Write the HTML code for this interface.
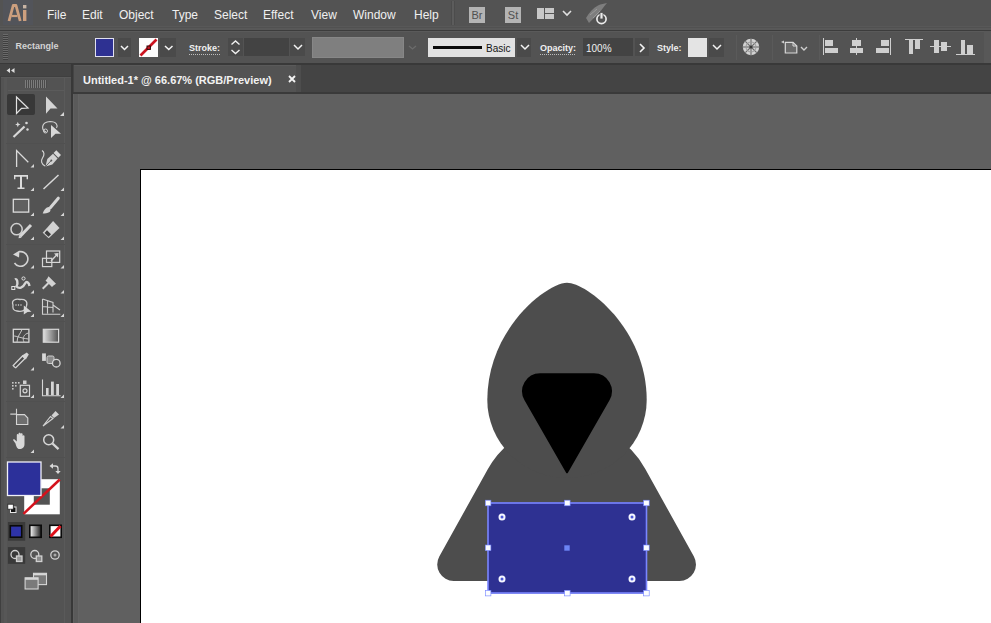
<!DOCTYPE html>
<html><head><meta charset="utf-8">
<style>
*{box-sizing:border-box;margin:0;padding:0}
html,body{width:991px;height:623px;overflow:hidden;background:#535353;font-family:"Liberation Sans",sans-serif}
.a{position:absolute}
.t{position:absolute;white-space:nowrap;line-height:11px}
</style></head>
<body>
<div class="a" style="left:0px;top:0px;width:991px;height:26px;background:#535353;"></div>
<div class="a" style="left:0px;top:26px;width:991px;height:4px;background:#585858;"></div>
<div class="a" style="left:0px;top:30px;width:991px;height:1px;background:#3c3c3c;"></div>
<svg class="a" style="left:0;top:0" width="34" height="26">
<rect x="3" y="0" width="30" height="25" fill="#52545a"/>
<path d="M9,21 L13.2,5.5 L16,5.5 L20.2,21" fill="none" stroke="#cc9f7e" stroke-width="2.8" stroke-linejoin="round"/>
<line x1="11.5" y1="16" x2="17.5" y2="16" stroke="#cc9f7e" stroke-width="2.2"/>
<rect x="23" y="5" width="3.4" height="3.4" fill="#c8b4a4"/>
<rect x="23" y="10" width="3.4" height="11" fill="#cc9f7e"/>
</svg>
<div class="t" style="left:47px;top:8px;font-size:12px;color:#f0f0f0;font-weight:400;line-height:14px;">File</div>
<div class="t" style="left:82px;top:8px;font-size:12px;color:#f0f0f0;font-weight:400;line-height:14px;">Edit</div>
<div class="t" style="left:119px;top:8px;font-size:12px;color:#f0f0f0;font-weight:400;line-height:14px;">Object</div>
<div class="t" style="left:172px;top:8px;font-size:12px;color:#f0f0f0;font-weight:400;line-height:14px;">Type</div>
<div class="t" style="left:214px;top:8px;font-size:12px;color:#f0f0f0;font-weight:400;line-height:14px;">Select</div>
<div class="t" style="left:263px;top:8px;font-size:12px;color:#f0f0f0;font-weight:400;line-height:14px;">Effect</div>
<div class="t" style="left:311px;top:8px;font-size:12px;color:#f0f0f0;font-weight:400;line-height:14px;">View</div>
<div class="t" style="left:353px;top:8px;font-size:12px;color:#f0f0f0;font-weight:400;line-height:14px;">Window</div>
<div class="t" style="left:414px;top:8px;font-size:12px;color:#f0f0f0;font-weight:400;line-height:14px;">Help</div>
<div class="a" style="left:451px;top:1px;width:1px;height:24px;background:#4c4c4c;"></div>
<div class="a" style="left:452px;top:1px;width:2px;height:24px;background:#5c5c5c;"></div>
<div class="a" style="left:454px;top:1px;width:1px;height:24px;background:#4c4c4c;"></div>
<div class="a" style="left:469px;top:7px;width:16px;height:16px;background:#b4b4b4;"></div>
<div class="t" style="left:469px;top:7px;font-size:11px;color:#505050;font-weight:400;width:16px;text-align:center;line-height:16px;">Br</div>
<div class="a" style="left:505px;top:7px;width:16px;height:16px;background:#b4b4b4;"></div>
<div class="t" style="left:505px;top:7px;font-size:11px;color:#505050;font-weight:400;width:16px;text-align:center;line-height:16px;">St</div>
<div class="a" style="left:537px;top:8px;width:7px;height:11px;background:#c8c8c8;"></div>
<div class="a" style="left:545px;top:8px;width:9px;height:5px;background:#c8c8c8;"></div>
<div class="a" style="left:545px;top:14px;width:9px;height:5px;background:#c8c8c8;"></div>
<svg class="a" style="left:562px;top:10px" width="10" height="7"><polyline points="1,1 5.0,5 9,1" fill="none" stroke="#e0e0e0" stroke-width="1.6"/></svg>
<svg class="a" style="left:585px;top:2px" width="26" height="24">
<path d="M1,16 C4,11 8,6 13,3.5 C16,2 19,1.5 22,1 C19,4 17,8 14,11 C11,14 7,18 4,21 Z" fill="#7e7e7e"/>
<path d="M5,13 L12,7 M8,16 L15,9" stroke="#9a9a9a" stroke-width="1"/>
<circle cx="16.5" cy="17" r="4.6" fill="none" stroke="#ececec" stroke-width="1.7"/>
<rect x="15" y="10.5" width="3" height="6.5" fill="#ececec" stroke="#535353" stroke-width="0.8"/>
</svg>
<div class="a" style="left:0px;top:31px;width:991px;height:32px;background:#535353;"></div>
<div class="a" style="left:0px;top:31px;width:991px;height:1px;background:#5a5a5a;"></div>
<div class="a" style="left:0px;top:27px;width:991px;height:1px;background:#515151;"></div>
<div class="a" style="left:0px;top:63px;width:991px;height:1px;background:#393939;"></div>
<div class="a" style="left:3px;top:34px;width:5px;height:26px;background:repeating-linear-gradient(#6a6a6a 0 1px,#3f3f3f 1px 2px)"></div>
<div class="t" style="left:15.5px;top:41px;font-size:9px;color:#d4d4d4;font-weight:700;line-height:11px;">Rectangle</div>
<div class="a" style="left:95px;top:38px;width:19px;height:19px;background:#2e3192;border:1px solid #e0e0f0;"></div>
<div class="a" style="left:118px;top:38px;width:13px;height:19px;background:#4a4a4a;"></div>
<svg class="a" style="left:120px;top:44.5px" width="9" height="6.5"><polyline points="1,1 4.5,4.5 8,1" fill="none" stroke="#f4f4f4" stroke-width="1.5"/></svg>
<svg class="a" style="left:139px;top:38px" width="19" height="19">
<rect x="0" y="0" width="19" height="19" fill="#fdfdfd"/>
<line x1="1.5" y1="17.5" x2="17.5" y2="1.5" stroke="#cc1420" stroke-width="2.6"/>
<rect x="8" y="8" width="3.4" height="3.4" fill="#cc1420" stroke="#2a0505" stroke-width="1"/>
</svg>
<div class="a" style="left:160px;top:38px;width:16px;height:19px;background:#4a4a4a;"></div>
<svg class="a" style="left:164px;top:44.5px" width="9.5" height="6.5"><polyline points="1,1 4.75,4.5 8.5,1" fill="none" stroke="#f4f4f4" stroke-width="1.5"/></svg>
<div class="t" style="left:189px;top:43px;font-size:9px;color:#f0f0f0;font-weight:700;line-height:11px;">Stroke:</div>
<div class="a" style="left:189px;top:54px;width:31px;height:1px;background:repeating-linear-gradient(90deg,#bdbdbd 0 1px,transparent 1px 2px)"></div>
<div class="a" style="left:228px;top:38px;width:15px;height:18px;background:#4a4a4a;"></div>
<svg class="a" style="left:230px;top:40px" width="11" height="15">
<polyline points="1.5,4.5 5.5,1 9.5,4.5" fill="none" stroke="#f0f0f0" stroke-width="1.4"/>
<polyline points="1.5,10 5.5,13.5 9.5,10" fill="none" stroke="#f0f0f0" stroke-width="1.4"/>
</svg>
<div class="a" style="left:244px;top:38px;width:45px;height:18px;background:#434343;"></div>
<div class="a" style="left:290px;top:38px;width:15px;height:18px;background:#4a4a4a;"></div>
<svg class="a" style="left:293px;top:44px" width="10" height="7"><polyline points="1,1 5.0,5 9,1" fill="none" stroke="#f4f4f4" stroke-width="1.5"/></svg>
<div class="a" style="left:312px;top:37px;width:92px;height:21px;background:#7f7f7f;border:1px solid #878787;"></div>
<svg class="a" style="left:408px;top:45px" width="9" height="6"><polyline points="1,1 4.5,4 8,1" fill="none" stroke="#6c6c6c" stroke-width="1.3"/></svg>
<div class="a" style="left:428px;top:38px;width:87px;height:19px;background:#e2e2e2;"></div>
<div class="a" style="left:433px;top:46px;width:49px;height:3px;background:#0a0a0a;"></div>
<div class="t" style="left:486px;top:43px;font-size:10px;color:#151515;font-weight:400;line-height:11px;">Basic</div>
<div class="a" style="left:517px;top:38px;width:14px;height:19px;background:#4a4a4a;"></div>
<svg class="a" style="left:520px;top:44px" width="10" height="7"><polyline points="1,1 5.0,5 9,1" fill="none" stroke="#f4f4f4" stroke-width="1.5"/></svg>
<div class="t" style="left:540px;top:42.5px;font-size:9px;color:#f0f0f0;font-weight:700;line-height:11px;">Opacity:</div>
<div class="a" style="left:540px;top:54px;width:36px;height:1px;background:repeating-linear-gradient(90deg,#bdbdbd 0 1px,transparent 1px 2px)"></div>
<div class="a" style="left:583px;top:38px;width:50px;height:18px;background:#434343;"></div>
<div class="t" style="left:586px;top:43px;font-size:10px;color:#f0f0f0;font-weight:400;line-height:11px;">100%</div>
<div class="a" style="left:635px;top:38px;width:14px;height:18px;background:#4a4a4a;"></div>
<svg class="a" style="left:638px;top:43px" width="8" height="10">
<polyline points="2,1 6,5 2,9" fill="none" stroke="#f4f4f4" stroke-width="1.6"/>
</svg>
<div class="t" style="left:657px;top:43px;font-size:9px;color:#f0f0f0;font-weight:700;line-height:11px;">Style:</div>
<div class="a" style="left:688px;top:38px;width:19px;height:19px;background:#e4e4e4;"></div>
<div class="a" style="left:709px;top:38px;width:15px;height:19px;background:#4a4a4a;"></div>
<svg class="a" style="left:712px;top:44px" width="10" height="7"><polyline points="1,1 5.0,5 9,1" fill="none" stroke="#f4f4f4" stroke-width="1.5"/></svg>
<div class="a" style="left:736px;top:35px;width:1px;height:25px;background:#5a5a5a;"></div>
<svg class="a" style="left:741px;top:37px" width="20" height="20">
<circle cx="10" cy="10" r="8.2" fill="#d2d2d2"/>
<g stroke="#6a6a6a" stroke-width="1.1">
<line x1="10" y1="2" x2="10" y2="18"/><line x1="2" y1="10" x2="18" y2="10"/>
<line x1="4.3" y1="4.3" x2="15.7" y2="15.7"/><line x1="15.7" y1="4.3" x2="4.3" y2="15.7"/>
</g>
<circle cx="10" cy="10" r="5" fill="none" stroke="#9a9a9a" stroke-width="1"/>
<circle cx="10" cy="10" r="1.6" fill="#3a3a3a"/>
</svg>
<div class="a" style="left:772px;top:35px;width:1px;height:25px;background:#5a5a5a;"></div>
<svg class="a" style="left:778px;top:37px" width="22" height="20">
<path d="M3,5 L6,3.5 V6.5 Z" fill="#cfcfcf"/>
<path d="M7.3,5.3 H15 L18.8,9 V16 H7.3 Z" fill="#6a6a6a" stroke="#d8d8d8" stroke-width="1.2"/>
<path d="M15,5.3 V9 H18.8" fill="none" stroke="#d8d8d8" stroke-width="1"/>
</svg>
<svg class="a" style="left:800px;top:45.5px" width="8" height="6"><polyline points="1,1 4.0,4 7,1" fill="none" stroke="#cfcfcf" stroke-width="1.4"/></svg>
<div class="a" style="left:819px;top:35px;width:1px;height:25px;background:#5a5a5a;"></div>
<div class="a" style="left:823px;top:38px;width:1px;height:17px;background:#cfcfcf;"></div>
<div class="a" style="left:825px;top:40px;width:8px;height:6px;background:#cfcfcf;"></div>
<div class="a" style="left:825px;top:48px;width:13px;height:5px;background:#cfcfcf;"></div>
<div class="a" style="left:856px;top:38px;width:1px;height:17px;background:#cfcfcf;"></div>
<div class="a" style="left:852px;top:40px;width:9px;height:6px;background:#cfcfcf;"></div>
<div class="a" style="left:850px;top:48px;width:13px;height:5px;background:#cfcfcf;"></div>
<div class="a" style="left:890px;top:38px;width:1px;height:17px;background:#cfcfcf;"></div>
<div class="a" style="left:881px;top:40px;width:8px;height:6px;background:#cfcfcf;"></div>
<div class="a" style="left:876px;top:48px;width:13px;height:5px;background:#cfcfcf;"></div>
<div class="a" style="left:905px;top:39px;width:18px;height:1px;background:#cfcfcf;"></div>
<div class="a" style="left:909px;top:40px;width:4px;height:14px;background:#cfcfcf;"></div>
<div class="a" style="left:915px;top:40px;width:5px;height:9px;background:#cfcfcf;"></div>
<div class="a" style="left:930px;top:46px;width:21px;height:1px;background:#cfcfcf;"></div>
<div class="a" style="left:934px;top:40px;width:5px;height:13px;background:#cfcfcf;"></div>
<div class="a" style="left:941px;top:42px;width:6px;height:9px;background:#cfcfcf;"></div>
<div class="a" style="left:956px;top:54px;width:19px;height:1px;background:#cfcfcf;"></div>
<div class="a" style="left:961px;top:40px;width:4px;height:14px;background:#cfcfcf;"></div>
<div class="a" style="left:967px;top:45px;width:6px;height:9px;background:#cfcfcf;"></div>
<div class="a" style="left:984px;top:31px;width:7px;height:32px;background:#585858;"></div>
<div class="a" style="left:0px;top:64px;width:72px;height:559px;background:#535353;"></div>
<div class="a" style="left:0px;top:64px;width:72px;height:12px;background:#444444;"></div>
<div class="a" style="left:0px;top:76px;width:72px;height:1px;background:#3f3f3f;"></div>
<div class="a" style="left:0px;top:77px;width:72px;height:1px;background:#5a5a5a;"></div>
<div class="a" style="left:4px;top:78px;width:3px;height:545px;background:#575757;"></div>
<div class="a" style="left:64px;top:78px;width:1px;height:545px;background:#5a5a5a;"></div>
<div class="a" style="left:0px;top:77px;width:1px;height:546px;background:#3f3f3f;"></div>
<div class="a" style="left:71px;top:64px;width:2px;height:559px;background:#383838;"></div>
<svg class="a" style="left:5px;top:66px" width="11" height="9">
<path d="M5,2 L1.5,4.5 L5,7 Z M9.5,2 L6,4.5 L9.5,7 Z" fill="#dcdcdc"/>
</svg>
<div class="a" style="left:25px;top:80px;width:22px;height:8px;background:repeating-linear-gradient(90deg,#7c7c7c 0 1px,#4a4a4a 1px 2px)"></div>
<div class="a" style="left:8px;top:90px;width:56px;height:1px;background:#5b5b5b;"></div>
<div class="a" style="left:7px;top:94px;width:28px;height:21px;background:#383838;border-radius:2px;"></div>
<svg class="a" style="left:0;top:0" width="72" height="623" viewBox="0 0 72 623">
<g fill="#d6d6d6">
<!-- corner triangles -->
<path d="M64,112 V116 H60 Z"/>
<path d="M34,164 V167.5 H30.5 Z"/><path d="M34,187.5 V191 H30.5 Z"/><path d="M64,187.5 V191 H60.5 Z"/>
<path d="M34,212.5 V216 H30.5 Z"/><path d="M64,212.5 V216 H60.5 Z"/>
<path d="M34,236.5 V240 H30.5 Z"/><path d="M64,236.5 V240 H60.5 Z"/>
<path d="M34,265 V268.5 H30.5 Z"/><path d="M64,265 V268.5 H60.5 Z"/>
<path d="M34,290 V293.5 H30.5 Z"/><path d="M64,290 V293.5 H60.5 Z"/>
<path d="M34,313.5 V317 H30.5 Z"/><path d="M64,313.5 V317 H60.5 Z"/>
<path d="M34,367 V370.5 H30.5 Z"/>
<path d="M34,394.5 V398 H30.5 Z"/><path d="M64,394.5 V398 H60.5 Z"/>
<path d="M64,425 V428.5 H60.5 Z"/>
<path d="M34,449.5 V453 H30.5 Z"/>
</g>
<!-- row1: selection -->
<path d="M16.5,97 L28,108 L21.5,108.3 L16.5,113.5 Z" fill="#383838" stroke="#e2e2e2" stroke-width="1.2" stroke-linejoin="miter"/>
<path d="M46,96.5 L57.5,108.5 L50.5,108.5 L46,113.8 Z" fill="#d4d4d4"/>
<!-- row2: magic wand, lasso -->
<line x1="13.5" y1="137" x2="24.5" y2="126.5" stroke="#d8d8d8" stroke-width="2.2"/>
<path d="M17.8,121.8 L18.6,123.7 L20.5,124.5 L18.6,125.3 L17.8,127.2 L17,125.3 L15.1,124.5 L17,123.7 Z" fill="#d8d8d8"/>
<circle cx="26.5" cy="123" r="1.3" fill="#d8d8d8"/><circle cx="27.5" cy="129.5" r="1.2" fill="#d8d8d8"/>
<path d="M46,132 C41,130 41,122 50,121.5 C57,121.5 58,126 56.5,128" fill="none" stroke="#d0d0d0" stroke-width="1.2"/>
<circle cx="45.5" cy="131" r="2" fill="none" stroke="#d0d0d0" stroke-width="1"/>
<path d="M51,125 L61,133.8 L55.5,133.8 L51,138 Z" fill="#d8d8d8"/>
<!-- row3: curvature, pen -->
<polyline points="16.6,167 16.6,150.5 28.3,162.2" fill="none" stroke="#dadada" stroke-width="1.3"/>
<path d="M45,166 C41.5,164 40.5,161 42.5,158 C44.5,155 44.5,152 42,150.5" fill="none" stroke="#d4d4d4" stroke-width="1.2"/>
<path d="M45.5,166.5 L47.3,159 L53,153.8 L57.6,158.4 L52.3,164.4 Z" fill="#d2d2d2"/>
<path d="M53.6,153 L56.3,150.3 L61,155 L58.3,157.7 Z" fill="#d8d8d8"/>
<line x1="45.8" y1="166.2" x2="50.8" y2="161" stroke="#535353" stroke-width="0.9"/>
<circle cx="51.3" cy="160.4" r="1" fill="#535353"/>
<!-- row4: type, line -->
<path d="M14,175 H28 V179.2 H26.6 V176.8 H22 V187.4 H24.5 V189 H17.5 V187.4 H20 V176.8 H15.4 V179.2 H14 Z" fill="#dcdcdc"/>
<line x1="43.5" y1="189" x2="58.5" y2="175" stroke="#d8d8d8" stroke-width="1.5"/>
<!-- row5: rect, brush -->
<rect x="13.3" y="199.3" width="15.4" height="12.8" fill="#5f5f5f" stroke="#dcdcdc" stroke-width="1.3"/>
<line x1="58.3" y1="198.2" x2="50.5" y2="207.5" stroke="#d6d6d6" stroke-width="3" stroke-linecap="round"/>
<path d="M42.7,213.5 C44,210 45.5,207.5 48.5,207 C51,207.5 51,210.5 49.5,212 C47.5,213.5 45,213.5 42.7,213.5 Z" fill="#d6d6d6"/>
<!-- row6: shaper, eraser -->
<circle cx="16.6" cy="229.2" r="5.6" fill="#4e4e4e" stroke="#cfcfcf" stroke-width="1.5"/>
<line x1="31" y1="225" x2="20" y2="236.5" stroke="#d6d6d6" stroke-width="3"/>
<path d="M18.5,238.3 L19,235.5 L21.5,237.8 Z" fill="#d6d6d6"/>
<path d="M42.7,232.7 L53.1,221.1 L59.5,227.9 L48.7,238.3 Z" fill="#d2d2d2"/>
<path d="M44.5,233 L47,230.3 L51,234.3 L48.5,236.8 Z" fill="#3e3e3e"/>
<!-- row7: rotate, scale -->
<path d="M19,251.8 A7.3,7.3 0 1 1 14.5,263" fill="none" stroke="#d2d2d2" stroke-width="1.6"/>
<path d="M13,254.5 L19.5,250.5 L19,257.5 Z" fill="#d6d6d6"/>
<rect x="46.5" y="251" width="13.2" height="11.4" fill="none" stroke="#d6d6d6" stroke-width="1.2"/>
<rect x="42.5" y="258.3" width="9.3" height="8.3" fill="none" stroke="#d6d6d6" stroke-width="1.2"/>
<line x1="51" y1="261" x2="57.5" y2="254" stroke="#d6d6d6" stroke-width="1.3"/>
<path d="M58.5,253 L58,257.5 L54,253.5 Z" fill="#d6d6d6"/>
<!-- row8: width, puppet -->
<path d="M15,279.5 C17,278 18.5,283 16.5,286.5 C19,289 23,288 25,283.5 C26.5,281 29,282 29.5,286" fill="none" stroke="#d4d4d4" stroke-width="2.4"/>
<circle cx="23.5" cy="278.5" r="1.6" fill="none" stroke="#e0e0e0" stroke-width="1"/>
<rect x="11.8" y="286.5" width="3" height="3" fill="none" stroke="#e0e0e0" stroke-width="1"/>
<path d="M48.5,276.3 L56,283.8 L53.5,285.5 L52,287 L45.5,280.5 L47,279 Z" fill="#d2d2d2"/>
<line x1="42.7" y1="288.7" x2="48.5" y2="283" stroke="#d2d2d2" stroke-width="2"/>
<!-- row9: shape builder, perspective -->
<path d="M13,305 C11,300 16,298.5 20,299.5 C25,299 28,301 26.5,306 C26,310.5 22,312 17,311 C13,310.5 12.5,308 13,305 Z" fill="#4a4a4a" stroke="#cfcfcf" stroke-width="1.3"/>
<g fill="#e0e0e0"><circle cx="16" cy="305" r="0.7"/><circle cx="18.5" cy="305" r="0.7"/><circle cx="21" cy="305" r="0.7"/></g>
<path d="M23.8,305.4 L31.5,311.8 L27.5,312 L23.8,314.6 Z" fill="#d6d6d6"/>
<path d="M42.5,299 V314.3 H60.3 M42.5,299 L53,302.5 V312.5 M47.5,300.6 V313.5 M42.5,306.5 L53,307.5 M53,305 L60,310" fill="none" stroke="#d0d0d0" stroke-width="1.1"/>
<!-- row10: mesh, gradient -->
<rect x="13.3" y="329.3" width="15.6" height="12.9" fill="#4c4c4c" stroke="#d8d8d8" stroke-width="1.3"/>
<path d="M17,342 C17,336 21,333 22,329.5 M24,342 C22,338 24,334 28.5,333 M13.5,336 C17,336 20,338 28.5,339" fill="none" stroke="#c8c8c8" stroke-width="1"/>
<defs><linearGradient id="gr" x1="0" x2="1"><stop offset="0" stop-color="#e0e0e0"/><stop offset="1" stop-color="#505050"/></linearGradient></defs>
<rect x="43.3" y="329.3" width="15.3" height="12.9" fill="url(#gr)" stroke="#d8d8d8" stroke-width="1.2"/>
<!-- row11: eyedropper, blend -->
<path d="M14.5,367 L13.2,365.5 L22.5,356 L25,358.5 L15.8,367.8 Z" fill="#4a4a4a" stroke="#d4d4d4" stroke-width="1.3"/>
<path d="M22,355.5 L26.8,352.5 L28.8,354.5 L25.8,359.5 Z" fill="#d4d4d4"/>
<rect x="42.1" y="353.4" width="3.8" height="7.5" fill="#d8d8d8"/>
<rect x="47" y="356" width="7" height="7.5" rx="1.5" fill="#8a8a8a" stroke="#d0d0d0" stroke-width="1"/>
<circle cx="56.3" cy="363.2" r="3.8" fill="#535353" stroke="#d6d6d6" stroke-width="1.3"/>
<!-- row12: symbol sprayer, graph -->
<g fill="#c8c8c8"><rect x="12" y="382" width="1.6" height="1.6"/><rect x="15" y="382" width="1.6" height="1.6"/><rect x="18" y="382" width="1.6" height="1.6"/><rect x="12" y="385" width="1.6" height="1.6"/><rect x="15" y="385" width="1.6" height="1.6"/><rect x="12" y="388" width="1.6" height="1.6"/></g>
<rect x="23" y="380.5" width="3.5" height="3.5" fill="#d0d0d0"/>
<rect x="20.3" y="385.3" width="9.2" height="11" fill="#535353" stroke="#d6d6d6" stroke-width="1.2"/>
<circle cx="25" cy="390.8" r="2" fill="none" stroke="#d6d6d6" stroke-width="1.2"/>
<path d="M42.5,379.5 V395.7 H60.6" fill="none" stroke="#d6d6d6" stroke-width="1.1"/>
<rect x="46" y="388" width="2.6" height="7.2" fill="#d6d6d6"/><rect x="51" y="381.6" width="2.8" height="13.6" fill="#d6d6d6"/><rect x="56.2" y="384" width="2.8" height="11.2" fill="#d6d6d6"/>
<!-- row13: artboard, slice -->
<path d="M10.3,414.1 H16.5 M16.5,408.8 V414" stroke="#d0d0d0" stroke-width="1.1"/>
<path d="M16.5,414.6 H24.5 L27.8,418 V424.5 H16.5 Z" fill="#6e6e6e" stroke="#d6d6d6" stroke-width="1.1"/>
<path d="M43,426 L50.5,416.5 L53,418.5 Z" fill="none" stroke="#d2d2d2" stroke-width="1.2"/>
<path d="M51.5,415.5 L55.5,411 L59,414.5 L54,418 Z" fill="#d2d2d2"/>
<!-- row14: hand, zoom -->
<path d="M15.5,443.5 L13.2,440.2 C12.8,439.4 13.8,438.8 14.6,439.4 L16.8,441.5 V434.8 C16.8,433.6 18.6,433.6 18.6,434.8 V440 V433.6 C18.6,432.6 20.6,432.6 20.6,433.6 V440 V434 C20.6,433 22.6,433 22.6,434 V440.5 V436 C22.6,435 24.5,435 24.5,436 V444 C24.5,447.5 22.5,449 19.5,449 C17.5,449 16.5,447.5 15.5,443.5 Z" fill="#d8d8d8"/>
<circle cx="48.7" cy="439.7" r="5" fill="none" stroke="#d6d6d6" stroke-width="1.5"/>
<line x1="52.5" y1="443.5" x2="58.5" y2="449.2" stroke="#d6d6d6" stroke-width="2.4"/>
<!-- separators -->
<g fill="#505050"><rect x="6" y="143" width="59" height="1"/><rect x="6" y="244" width="59" height="1"/><rect x="6" y="321" width="59" height="1"/><rect x="6" y="401" width="59" height="1"/><rect x="6" y="457" width="59" height="1"/></g>
<!-- fill / stroke -->
<rect x="24.2" y="479.2" width="35.6" height="35.1" fill="#ffffff"/>
<rect x="33.8" y="488.3" width="16" height="16.4" fill="#535353"/>
<line x1="23.5" y1="513.8" x2="59.8" y2="479.5" stroke="#d4121c" stroke-width="2.5"/>
<rect x="7.5" y="462" width="33.5" height="33.5" fill="#2c309a" stroke="#f0f0f8" stroke-width="1.3"/>
<path d="M52,466 H55.5 Q58,466 58,468.5 V471" fill="none" stroke="#d8d8d8" stroke-width="1.3"/>
<path d="M49.5,466 L53,463.3 V468.7 Z M55.3,471 H60.7 L58,474 Z" fill="#d8d8d8"/>
<rect x="10.5" y="507" width="5.5" height="5.5" fill="#111" stroke="#e8e8e8" stroke-width="1"/>
<rect x="7.8" y="504.2" width="5.5" height="5" fill="#ffffff" stroke="#222" stroke-width="0.8"/>
<!-- color/gradient/none -->
<rect x="7.9" y="522" width="17.3" height="18.7" fill="#3a3a3a"/>
<rect x="10.3" y="525.8" width="11.4" height="11.4" fill="#2e33a8" stroke="#0a0a0a" stroke-width="1.6"/>
<defs><linearGradient id="gr2" x1="0" x2="1"><stop offset="0" stop-color="#ffffff"/><stop offset="1" stop-color="#1a1a1a"/></linearGradient></defs>
<rect x="29.8" y="525.3" width="11.4" height="12" fill="url(#gr2)" stroke="#0a0a0a" stroke-width="1.6"/>
<rect x="49.8" y="525.3" width="11.4" height="12" fill="#ffffff" stroke="#0a0a0a" stroke-width="1.6"/>
<line x1="50.5" y1="536.5" x2="60.5" y2="526" stroke="#e0101a" stroke-width="3"/>
<!-- draw modes -->
<rect x="7.9" y="547.1" width="17.3" height="16.7" fill="#393939"/>
<g fill="none" stroke="#d0d0d0" stroke-width="1.3">
<circle cx="15" cy="554.5" r="4"/><rect x="16.5" y="556" width="5.5" height="5.5" fill="#9a9a9a"/>
<circle cx="34.8" cy="554.5" r="4"/><rect x="36.3" y="556" width="5.5" height="5.5" fill="#8a8a8a"/>
<circle cx="55" cy="555" r="4.2"/>
</g>
<circle cx="55" cy="555" r="1.5" fill="#aaaaaa"/>
<!-- screen mode -->
<rect x="33.5" y="573.3" width="13" height="11.3" fill="#7a7a7a" stroke="#d6d6d6" stroke-width="1.1"/>
<rect x="33.5" y="573.3" width="13" height="2" fill="#d6d6d6"/>
<rect x="25.1" y="577.8" width="13" height="11.2" fill="#7a7a7a" stroke="#d6d6d6" stroke-width="1.1"/>
<rect x="25.1" y="577.8" width="13" height="2" fill="#d6d6d6"/>
</svg>
<div class="a" style="left:73px;top:64px;width:918px;height:1px;background:#393939;"></div>
<div class="a" style="left:73px;top:65px;width:918px;height:27px;background:#444444;"></div>
<div class="a" style="left:74px;top:65px;width:222px;height:27px;background:#535353;"></div>
<div class="a" style="left:74px;top:65px;width:222px;height:1px;background:#5a5a5a;"></div>
<div class="a" style="left:296px;top:65px;width:5px;height:27px;background:#4d4d4d;"></div>
<div class="a" style="left:73px;top:92px;width:918px;height:2px;background:#3a3a3a;"></div>
<div class="t" style="left:83px;top:74px;font-size:11px;color:#f2f2f2;font-weight:700;line-height:13px;">Untitled-1* @ 66.67% (RGB/Preview)</div>
<svg class="a" style="left:288px;top:75px" width="8" height="8">
<path d="M1,1 L7,7 M7,1 L1,7" stroke="#f4f4f4" stroke-width="1.8"/>
</svg>
<div class="a" style="left:73px;top:94px;width:918px;height:529px;background:#606060;"></div>
<div class="a" style="left:74px;top:94px;width:5px;height:529px;background:#5a5a5a;"></div>
<div class="a" style="left:78px;top:94px;width:1px;height:529px;background:#636363;"></div>
<div class="a" style="left:140px;top:169px;width:851px;height:454px;background:#000000;"></div>
<div class="a" style="left:141px;top:170px;width:850px;height:453px;background:#ffffff;"></div>
<svg class="a" style="left:0;top:0" width="991" height="623" viewBox="0 0 991 623">
  <path d="M645.3,469.0 L693.9,556.5 A16.5,16.5 0 0 1 679.5,581.0 L453.7,581.0 A16.5,16.5 0 0 1 439.3,556.5 L487.9,469.0 A90,90 0 0 1 645.3,469.0 Z" fill="#4d4d4d"/>
  <path d="M567,282.7 C547.4,282.7 487.3,328.6 487.3,399.9 A79.7,78 0 0 0 646.7,399.9 C646.7,328.6 586.6,282.7 567,282.7 Z" fill="#4d4d4d"/>
  <path d="M540.1,373.3 L593.9,373.3 A18,18 0 0 1 609.5,400.3 L567.9,472.8 A1,1 0 0 1 566.1,472.8 L524.5,400.3 A18,18 0 0 1 540.1,373.3 Z" fill="#000"/>
  <rect x="488" y="502.5" width="159" height="91" fill="#2e3192"/>
  <rect x="488" y="503" width="158.5" height="90" fill="none" stroke="#7a86ff" stroke-width="1.6"/>
  <g fill="#fafcff" stroke="#7080ff" stroke-width="0.6">
    <rect x="485.3" y="500.2" width="5.6" height="5.6"/><rect x="564.5" y="500.2" width="5.6" height="5.6"/><rect x="643.6" y="500.2" width="5.6" height="5.6"/>
    <rect x="485.3" y="545" width="5.6" height="5.6"/><rect x="643.6" y="545" width="5.6" height="5.6"/>
    <rect x="485.3" y="590.3" width="5.6" height="5.6"/><rect x="564.5" y="590.3" width="5.6" height="5.6"/><rect x="643.6" y="590.3" width="5.6" height="5.6"/>
  </g>
  <g fill="#4a58d8" stroke="#f4f6ff" stroke-width="2">
    <circle cx="502" cy="517" r="2.5"/><circle cx="632" cy="517" r="2.5"/><circle cx="502" cy="579" r="2.5"/><circle cx="632" cy="579" r="2.5"/>
  </g>
  <rect x="564.3" y="545.3" width="5.4" height="5.4" fill="#6c84f4"/>
</svg>
</body></html>
